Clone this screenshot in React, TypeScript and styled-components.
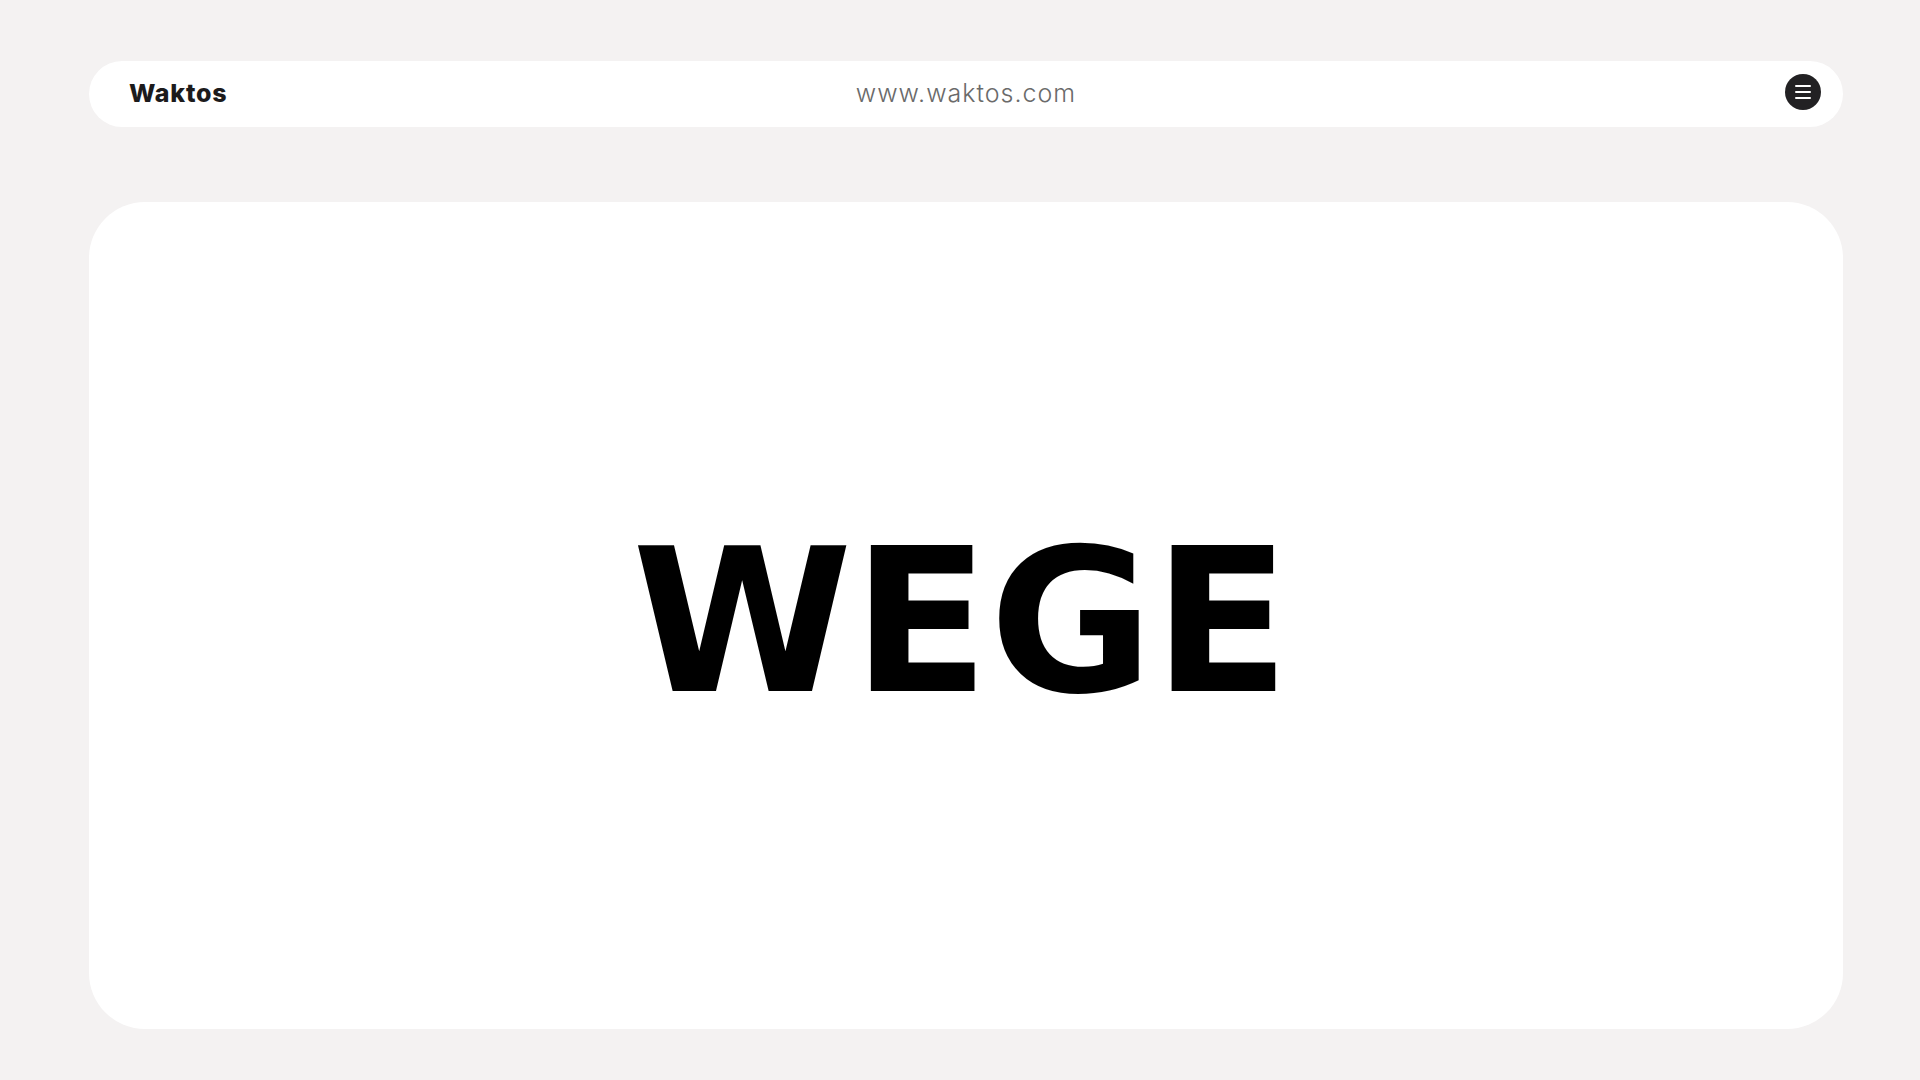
import React from 'react';
import styled, { createGlobalStyle } from 'styled-components';

const GlobalStyle = createGlobalStyle`
  html, body {
    margin: 0;
    padding: 0;
    background-color: #f4f2f2;
  }
  body {
    font-family: 'Inter', 'Liberation Sans', sans-serif;
  }
`;

const Page = styled.div`
  width: 1920px;
  height: 1080px;
  box-sizing: border-box;
  padding: 61px 77px 51px 89px;
  display: flex;
  flex-direction: column;
  gap: 75px;
  background-color: #f4f2f2;
`;

const Header = styled.header`
  height: 66px;
  flex-shrink: 0;
  border-radius: 33px;
  background-color: #ffffff;
  display: grid;
  grid-template-columns: 1fr auto 1fr;
  align-items: center;
  padding: 0 22px;
`;

const Logo = styled.div`
  margin: -2px 0 0 18px;
  font-family: 'Inter', 'Liberation Sans', sans-serif;
  font-weight: 800;
  font-size: 25px;
  color: #1c1b1c;
  letter-spacing: 0.8px;
`;

const Url = styled.div`
  margin: -2px 0 0 0;
  font-family: 'Inter', 'Liberation Sans', sans-serif;
  font-weight: 300;
  font-size: 25px;
  color: #6a6a6a;
  letter-spacing: 1px;
`;

const MenuButton = styled.button`
  justify-self: end;
  width: 36px;
  height: 36px;
  margin-top: -4px;
  border: none;
  border-radius: 50%;
  background-color: #222123;
  display: flex;
  flex-direction: column;
  align-items: center;
  justify-content: center;
  gap: 4px;
  padding: 0;
  cursor: pointer;
`;

const MenuLine = styled.span`
  display: block;
  width: 16px;
  height: 2px;
  background-color: #ffffff;
  border-radius: 1px;
`;

const Card = styled.main`
  flex: 1;
  border-radius: 56px;
  background-color: #ffffff;
  display: flex;
  align-items: center;
  justify-content: center;
`;

const Title = styled.h1`
  margin: 12px 10px 0 0;
  font-family: 'DejaVu Sans', sans-serif;
  font-weight: 700;
  font-size: 200px;
  line-height: 1;
  color: #000000;
  letter-spacing: 0;
`;

export default function App() {
  return (
    <>
      <GlobalStyle />
      <Page>
        <Header>
          <Logo>Waktos</Logo>
          <Url>www.waktos.com</Url>
          <MenuButton aria-label="Menu">
            <MenuLine />
            <MenuLine />
            <MenuLine />
          </MenuButton>
        </Header>
        <Card>
          <Title>WEGE</Title>
        </Card>
      </Page>
    </>
  );
}
